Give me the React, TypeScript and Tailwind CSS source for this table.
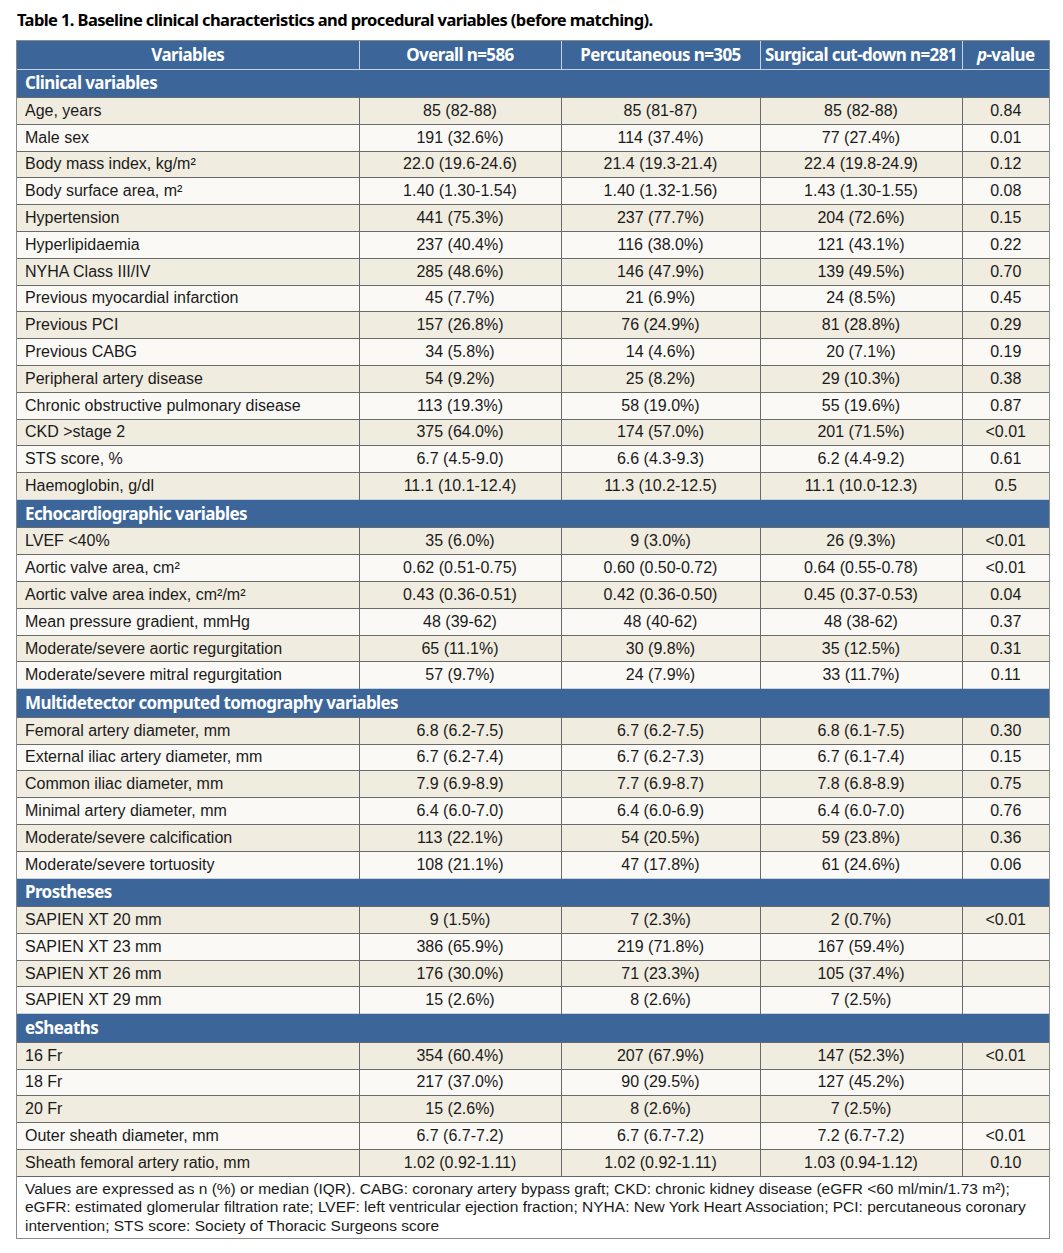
type Row = [string, string, string, string, string];

const sections: { title: string; rows: Row[] }[] = [
  {
    title: "Clinical variables",
    rows: [
      ["Age, years", "85 (82-88)", "85 (81-87)", "85 (82-88)", "0.84"],
      ["Male sex", "191 (32.6%)", "114 (37.4%)", "77 (27.4%)", "0.01"],
      ["Body mass index, kg/m²", "22.0 (19.6-24.6)", "21.4 (19.3-21.4)", "22.4 (19.8-24.9)", "0.12"],
      ["Body surface area, m²", "1.40 (1.30-1.54)", "1.40 (1.32-1.56)", "1.43 (1.30-1.55)", "0.08"],
      ["Hypertension", "441 (75.3%)", "237 (77.7%)", "204 (72.6%)", "0.15"],
      ["Hyperlipidaemia", "237 (40.4%)", "116 (38.0%)", "121 (43.1%)", "0.22"],
      ["NYHA Class III/IV", "285 (48.6%)", "146 (47.9%)", "139 (49.5%)", "0.70"],
      ["Previous myocardial infarction", "45 (7.7%)", "21 (6.9%)", "24 (8.5%)", "0.45"],
      ["Previous PCI", "157 (26.8%)", "76 (24.9%)", "81 (28.8%)", "0.29"],
      ["Previous CABG", "34 (5.8%)", "14 (4.6%)", "20 (7.1%)", "0.19"],
      ["Peripheral artery disease", "54 (9.2%)", "25 (8.2%)", "29 (10.3%)", "0.38"],
      ["Chronic obstructive pulmonary disease", "113 (19.3%)", "58 (19.0%)", "55 (19.6%)", "0.87"],
      ["CKD >stage 2", "375 (64.0%)", "174 (57.0%)", "201 (71.5%)", "<0.01"],
      ["STS score, %", "6.7 (4.5-9.0)", "6.6 (4.3-9.3)", "6.2 (4.4-9.2)", "0.61"],
      ["Haemoglobin, g/dl", "11.1 (10.1-12.4)", "11.3 (10.2-12.5)", "11.1 (10.0-12.3)", "0.5"],
    ],
  },
  {
    title: "Echocardiographic variables",
    rows: [
      ["LVEF <40%", "35 (6.0%)", "9 (3.0%)", "26 (9.3%)", "<0.01"],
      ["Aortic valve area, cm²", "0.62 (0.51-0.75)", "0.60 (0.50-0.72)", "0.64 (0.55-0.78)", "<0.01"],
      ["Aortic valve area index, cm²/m²", "0.43 (0.36-0.51)", "0.42 (0.36-0.50)", "0.45 (0.37-0.53)", "0.04"],
      ["Mean pressure gradient, mmHg", "48 (39-62)", "48 (40-62)", "48 (38-62)", "0.37"],
      ["Moderate/severe aortic regurgitation", "65 (11.1%)", "30 (9.8%)", "35 (12.5%)", "0.31"],
      ["Moderate/severe mitral regurgitation", "57 (9.7%)", "24 (7.9%)", "33 (11.7%)", "0.11"],
    ],
  },
  {
    title: "Multidetector computed tomography variables",
    rows: [
      ["Femoral artery diameter, mm", "6.8 (6.2-7.5)", "6.7 (6.2-7.5)", "6.8 (6.1-7.5)", "0.30"],
      ["External iliac artery diameter, mm", "6.7 (6.2-7.4)", "6.7 (6.2-7.3)", "6.7 (6.1-7.4)", "0.15"],
      ["Common iliac diameter, mm", "7.9 (6.9-8.9)", "7.7 (6.9-8.7)", "7.8 (6.8-8.9)", "0.75"],
      ["Minimal artery diameter, mm", "6.4 (6.0-7.0)", "6.4 (6.0-6.9)", "6.4 (6.0-7.0)", "0.76"],
      ["Moderate/severe calcification", "113 (22.1%)", "54 (20.5%)", "59 (23.8%)", "0.36"],
      ["Moderate/severe tortuosity", "108 (21.1%)", "47 (17.8%)", "61 (24.6%)", "0.06"],
    ],
  },
  {
    title: "Prostheses",
    rows: [
      ["SAPIEN XT 20 mm", "9 (1.5%)", "7 (2.3%)", "2 (0.7%)", "<0.01"],
      ["SAPIEN XT 23 mm", "386 (65.9%)", "219 (71.8%)", "167 (59.4%)", ""],
      ["SAPIEN XT 26 mm", "176 (30.0%)", "71 (23.3%)", "105 (37.4%)", ""],
      ["SAPIEN XT 29 mm", "15 (2.6%)", "8 (2.6%)", "7 (2.5%)", ""],
    ],
  },
  {
    title: "eSheaths",
    rows: [
      ["16 Fr", "354 (60.4%)", "207 (67.9%)", "147 (52.3%)", "<0.01"],
      ["18 Fr", "217 (37.0%)", "90 (29.5%)", "127 (45.2%)", ""],
      ["20 Fr", "15 (2.6%)", "8 (2.6%)", "7 (2.5%)", ""],
      ["Outer sheath diameter, mm", "6.7 (6.7-7.2)", "6.7 (6.7-7.2)", "7.2 (6.7-7.2)", "<0.01"],
      ["Sheath femoral artery ratio, mm", "1.02 (0.92-1.11)", "1.02 (0.92-1.11)", "1.03 (0.94-1.12)", "0.10"],
    ],
  },
];

// condensed bold face for the title and the blue bars
const cond = "font-['Noto_Sans',sans-serif] [font-stretch:condensed] tracking-[-0.6px]";

export default function App() {
  return (
    <div className="w-[1063px] h-[1253px] bg-white font-['Liberation_Sans',Arial,sans-serif] text-[#1a1a1a]">
      <div className="pl-[17px] pt-[8px] h-[40px]">
        <h1 className={`${cond} font-bold text-[16.5px] leading-[24px] text-black`}>
          Table 1. Baseline clinical characteristics and procedural variables (before matching).
        </h1>
      </div>
      <div className="ml-[16px] w-[1034px] border border-[#8a8a8a]">
        <table className="w-full border-collapse table-fixed text-[16px]">
          <colgroup>
            <col className="w-[342px]" />
            <col className="w-[202px]" />
            <col className="w-[199px]" />
            <col className="w-[202px]" />
            <col />
          </colgroup>
          <thead>
            <tr className={`h-[28px] bg-[#3c6699] text-white ${cond} text-[17px] leading-[20px]`}>
              <th className="border-r border-[#c9d3e0] font-bold whitespace-nowrap">Variables</th>
              <th className="border-r border-[#c9d3e0] font-bold whitespace-nowrap">Overall n=586</th>
              <th className="border-r border-[#c9d3e0] font-bold whitespace-nowrap">Percutaneous n=305</th>
              <th className="border-r border-[#c9d3e0] font-bold whitespace-nowrap">Surgical cut-down n=281</th>
              <th className="font-bold whitespace-nowrap">
                <i>p</i>-value
              </th>
            </tr>
          </thead>
          <tbody>
            {sections.map((s) => (
              <Section key={s.title} title={s.title} rows={s.rows} />
            ))}
            <tr>
              <td colSpan={5} className="px-[8px] pt-[3px] pb-[3px] text-[15.5px] leading-[18.5px] bg-white border-t border-[#666] whitespace-nowrap">
                Values are expressed as n (%) or median (IQR). CABG: coronary artery bypass graft; CKD: chronic kidney disease (eGFR &lt;60 ml/min/1.73 m²);
                <br />
                eGFR: estimated glomerular filtration rate; LVEF: left ventricular ejection fraction; NYHA: New York Heart Association; PCI: percutaneous coronary
                <br />
                intervention; STS score: Society of Thoracic Surgeons score
              </td>
            </tr>
          </tbody>
        </table>
      </div>
    </div>
  );
}

function Section({ title, rows }: { title: string; rows: Row[] }) {
  return (
    <>
      <tr className="h-[28.5px] bg-[#3c6699]">
        <td colSpan={5} className={`px-[8px] text-white font-bold text-[17px] leading-[20px] border-t border-[#c9d3e0] ${cond}`}>
          {title}
        </td>
      </tr>
      {rows.map((r, i) => (
        <tr key={r[0]} className={`h-[26.8px] leading-[18px] ${i % 2 === 0 ? "bg-[#f0ece0]" : "bg-[#faf9f5]"}`}>
          <td className="px-[8px] border-t border-r border-[#6a6a6a] whitespace-nowrap">{r[0]}</td>
          <td className="text-center border-t border-r border-[#6a6a6a]">{r[1]}</td>
          <td className="text-center border-t border-r border-[#6a6a6a]">{r[2]}</td>
          <td className="text-center border-t border-r border-[#6a6a6a]">{r[3]}</td>
          <td className="text-center border-t border-[#6a6a6a]">{r[4]}</td>
        </tr>
      ))}
    </>
  );
}
